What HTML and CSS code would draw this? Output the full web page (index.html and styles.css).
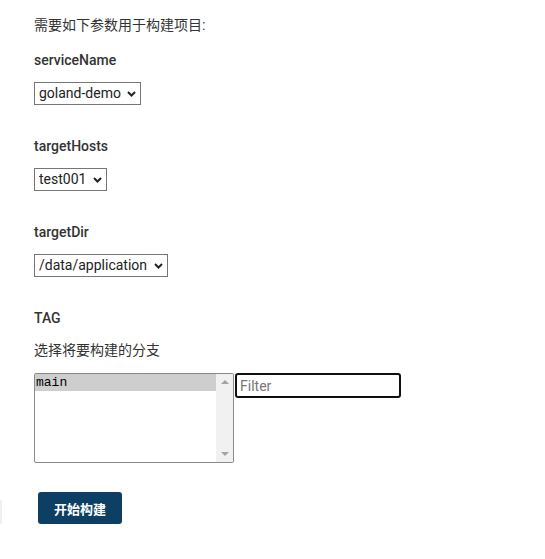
FILE: index.html
```html
<!DOCTYPE html>
<html lang="zh">
<head>
<meta charset="utf-8">
<title>构建参数</title>
<link rel="stylesheet" href="styles.css">
</head>
<body>
<div class="edge"></div>
<form class="page">
  <p class="intro">需要如下参数用于构建项目:</p>

  <div class="param">
    <div class="label">serviceName</div>
    <div class="select-wrap">
      <select class="select"><option>goland-demo</option></select>
      <svg class="chev" width="9" height="6" viewBox="0 0 9 6"><path d="M1 1 L4.5 4.5 L8 1" fill="none" stroke="#222" stroke-width="2"/></svg>
    </div>
  </div>

  <div class="param">
    <div class="label">targetHosts</div>
    <div class="select-wrap">
      <select class="select"><option>test001</option></select>
      <svg class="chev" width="9" height="6" viewBox="0 0 9 6"><path d="M1 1 L4.5 4.5 L8 1" fill="none" stroke="#222" stroke-width="2"/></svg>
    </div>
  </div>

  <div class="param">
    <div class="label">targetDir</div>
    <div class="select-wrap">
      <select class="select"><option>/data/application</option></select>
      <svg class="chev" width="9" height="6" viewBox="0 0 9 6"><path d="M1 1 L4.5 4.5 L8 1" fill="none" stroke="#222" stroke-width="2"/></svg>
    </div>
  </div>

  <div class="param tag">
    <div class="label">TAG</div>
    <p class="desc">选择将要构建的分支</p>
    <div class="picker">
      <div class="listbox">
        <div class="options">
          <div class="option selected">main</div>
        </div>
        <div class="scrollbar">
          <span class="arrow up"></span>
          <span class="arrow down"></span>
        </div>
      </div>
      <input class="filter" type="text" placeholder="Filter">
    </div>
  </div>

  <button type="button" class="submit">开始构建</button>
</form>
</body>
</html>
```

FILE: styles.css
```css
html, body {
  margin: 0;
  padding: 0;
  background: #fff;
}
body {
  font-family: Roboto, "Noto Sans CJK SC", sans-serif;
  font-size: 14px;
  color: #333;
  position: relative;
}
.edge {
  position: absolute;
  left: 0;
  top: 500px;
  width: 2px;
  height: 43px;
  background: #f0f0f0;
}
.page {
  padding: 15px 0 0 34px;
  display: flex;
  flex-direction: column;
  align-items: flex-start;
}
.intro {
  margin: 0;
  line-height: 20px;
}
.param {
  display: flex;
  flex-direction: column;
  align-items: flex-start;
  margin-top: 15px;
}
.param + .param {
  margin-top: 31px;
}
.label {
  font-weight: 500;
  line-height: 20px;
  margin-bottom: 12px;
}
.select-wrap {
  position: relative;
  display: inline-flex;
}
.select {
  appearance: none;
  -webkit-appearance: none;
  font: inherit;
  font-size: 14px;
  color: #222;
  height: 23px;
  line-height: 19px;
  margin: 0;
  padding: 0 19px 0 4px;
  border: 1px solid #767676;
  border-radius: 0;
  background: #fff;
}
.chev {
  position: absolute;
  right: 5px;
  top: 9px;
  pointer-events: none;
}
.desc {
  margin: 0 0 13px;
  line-height: 20px;
}
.picker {
  display: flex;
  align-items: flex-start;
  gap: 1px;
}
.listbox {
  width: 200px;
  height: 90px;
  box-sizing: border-box;
  border: 1px solid #8a8a8a;
  border-radius: 2px;
  display: flex;
  overflow: hidden;
}
.options {
  flex: 1;
}
.option {
  font-family: "Liberation Mono", monospace;
  font-size: 13px;
  line-height: 17px;
  color: #000;
  padding-left: 1px;
}
.option.selected {
  background: #cecece;
}
.scrollbar {
  width: 17px;
  background: #f1f1f1;
  display: flex;
  flex-direction: column;
  justify-content: space-between;
  align-items: center;
  padding: 6px 0;
}
.arrow {
  width: 0;
  height: 0;
  border-left: 4px solid transparent;
  border-right: 4px solid transparent;
}
.arrow.up {
  border-bottom: 4px solid #a3a3a3;
}
.arrow.down {
  border-top: 4px solid #a3a3a3;
}
.filter {
  width: 166px;
  height: 25px;
  box-sizing: border-box;
  border: 2px solid #101010;
  border-radius: 3px;
  padding: 0 3px;
  font: inherit;
  font-size: 14px;
  color: #222;
  outline: none;
}
.filter::placeholder {
  color: #767676;
}
.submit {
  margin: 29px 0 0 4px;
  width: 84px;
  height: 32px;
  border: none;
  border-radius: 3px;
  background: #0c3f63;
  color: #fff;
  font-family: "Noto Sans CJK SC", sans-serif;
  font-weight: 700;
  font-size: 13px;
  cursor: pointer;
}
```
